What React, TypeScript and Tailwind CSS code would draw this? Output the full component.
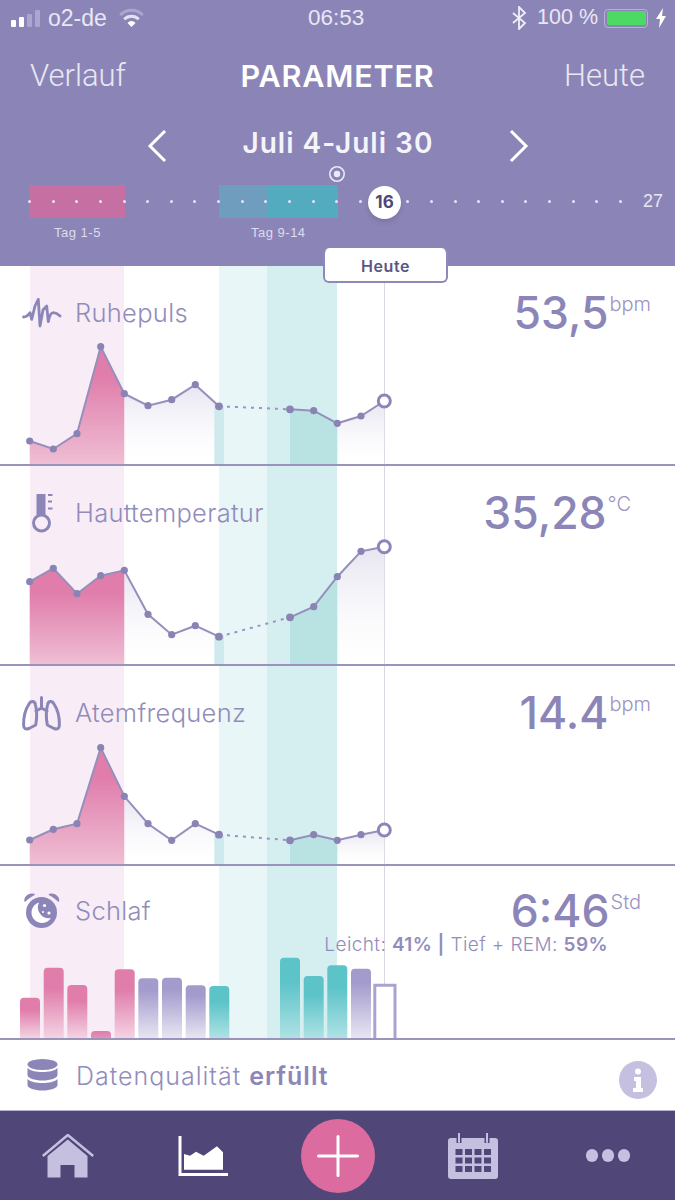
import { ReactNode } from "react";

const xs = [29.7, 53.3, 77, 100.7, 124.3, 148, 171.7, 195.3, 219, 290, 313.7, 337.3, 361, 384.3];

const interpolate = (ys: number[], x: number) => {
  for (let i = 0; i < xs.length - 1; i++) {
    if (x >= xs[i] && x <= xs[i + 1]) {
      return ys[i] + ((ys[i + 1] - ys[i]) * (x - xs[i])) / (xs[i + 1] - xs[i]);
    }
  }
  return ys[0];
};

const toPoints = (ids: number[], ys: number[], base: number) => {
  const top = ids.map((i) => `${xs[i]},${ys[i]}`).join(" ");
  return `${top} ${xs[ids[ids.length - 1]]},${base} ${xs[ids[0]]},${base}`;
};

const LineChart = ({ id, ys, top, base }: { id: string; ys: number[]; top: number; base: number }) => {
  const tealLeft = [
    `214.3,${interpolate(ys, 214.3)}`,
    `219,${ys[8]}`,
    `224,${interpolate(ys, 224)}`,
    `224,${base}`,
    `214.3,${base}`,
  ].join(" ");
  const height = base - top + 1;
  return (
    <svg className="block overflow-visible" width="675" height={height} viewBox={`0 ${top} 675 ${height}`}>
      <defs>
        <linearGradient id={`${id}-pink`} x1="0" y1="0" x2="0" y2="1">
          <stop offset="0.25" stopColor="#e07dab" />
          <stop offset="1" stopColor="#efbed4" />
        </linearGradient>
        <linearGradient id={`${id}-lav`} x1="0" y1="0" x2="0" y2="1">
          <stop offset="0" stopColor="#e6e4f0" />
          <stop offset="1" stopColor="#ffffff" stopOpacity="0.2" />
        </linearGradient>
      </defs>
      <polygon points={toPoints([4, 5, 6, 7, 8], ys, base)} fill={`url(#${id}-lav)`} />
      <polygon points={toPoints([9, 10, 11, 12, 13], ys, base)} fill={`url(#${id}-lav)`} />
      <polygon points={tealLeft} fill="#cfeaed" />
      <polygon points={toPoints([9, 10, 11], ys, base)} fill="#b9e2e3" />
      <polygon points={toPoints([0, 1, 2, 3, 4], ys, base)} fill={`url(#${id}-pink)`} />
      <polyline
        points={[0, 1, 2, 3, 4, 5, 6, 7, 8].map((i) => `${xs[i]},${ys[i]}`).join(" ")}
        fill="none"
        stroke="#9490bb"
        strokeWidth="2"
      />
      <line x1={xs[8]} y1={ys[8]} x2={xs[9]} y2={ys[9]} stroke="#9a95c0" strokeWidth="2" strokeDasharray="3 5" />
      <polyline
        points={[9, 10, 11, 12, 13].map((i) => `${xs[i]},${ys[i]}`).join(" ")}
        fill="none"
        stroke="#9490bb"
        strokeWidth="2"
      />
      {xs.slice(0, 13).map((x, i) => (
        <circle key={i} cx={x} cy={ys[i]} r={i === 8 || i === 9 ? 3.9 : 3.6} fill="#8a84b5" />
      ))}
      <circle cx={xs[13]} cy={ys[13]} r="6" fill="#ffffff" stroke="#8c86b8" strokeWidth="3" />
    </svg>
  );
};

const bars: [number, number, string][] = [
  [20, 997.7, "pink"],
  [43.7, 967.7, "pink"],
  [67.3, 985, "pink"],
  [91, 1031, "flat"],
  [114.7, 969.3, "pink"],
  [138.3, 978.3, "lav"],
  [162, 977.7, "lav"],
  [185.7, 985.3, "lav"],
  [209.3, 986, "teal"],
  [280, 957.7, "teal"],
  [303.7, 976, "teal"],
  [327.3, 965.3, "teal"],
  [351, 968.7, "lav"],
];

const SleepChart = () => {
  const top = 955;
  const base = 1038;
  return (
    <svg className="block overflow-visible" width="675" height={base - top} viewBox={`0 ${top} 675 ${base - top}`}>
      <defs>
        <linearGradient id="bar-pink" x1="0" y1="0" x2="0" y2="1">
          <stop offset="0.3" stopColor="#e07dab" />
          <stop offset="1" stopColor="#f4d3e2" />
        </linearGradient>
        <linearGradient id="bar-flat" x1="0" y1="0" x2="0" y2="1">
          <stop offset="0" stopColor="#df7dab" />
          <stop offset="1" stopColor="#e490b8" />
        </linearGradient>
        <linearGradient id="bar-lav" x1="0" y1="0" x2="0" y2="1">
          <stop offset="0.2" stopColor="#a49bcd" />
          <stop offset="1" stopColor="#e8e5f2" />
        </linearGradient>
        <linearGradient id="bar-teal" x1="0" y1="0" x2="0" y2="1">
          <stop offset="0.3" stopColor="#5cc3c8" />
          <stop offset="1" stopColor="#aee2e4" />
        </linearGradient>
      </defs>
      {bars.map(([x, y, color]) => (
        <path
          key={x}
          d={`M${x} ${base}V${y + 4}Q${x} ${y} ${x + 4} ${y}H${x + 16}Q${x + 20} ${y} ${x + 20} ${y + 4}V${base}Z`}
          fill={`url(#bar-${color})`}
        />
      ))}
      <path d="M374.8 1038V985.3H395V1038" fill="#ffffff" stroke="#aaa3cf" strokeWidth="3" />
    </svg>
  );
};

const PulseIcon = () => (
  <svg width="40" height="30" viewBox="0 0 40 30" fill="none" stroke="#8c86b8" strokeWidth="2.800" strokeLinecap="round" strokeLinejoin="round">
    <path d="M1.500 19Q5 19 8 14.700L9.700 21.300 13 8 16.300 1.300 18 28 21 12 24.700 8 26.300 23.700Q28 14.700 31.300 14.700T38 18" />
  </svg>
);

const ThermoIcon = () => (
  <svg width="22" height="40" viewBox="0 0 22 40" fill="none">
    <circle cx="10.500" cy="30" r="8" stroke="#8c86b8" strokeWidth="3" />
    <path d="M5.500 1h9v21h-9Z" fill="#8c86b8" />
    <path d="M17 2h4.500M17 8.500h4M17 15.500h4.500" stroke="#8c86b8" strokeWidth="2" />
  </svg>
);

const LungsIcon = () => (
  <svg width="40" height="35" viewBox="0 0 40 35" fill="none" stroke="#8c86b8" strokeWidth="3" strokeLinecap="round" strokeLinejoin="round">
    <path d="M19.500 1.500v11M14 15l5.500-3 5.500 3" />
    <path d="M13.500 9C13 5 9 4 7 8 3 14 1.500 22 1.600 29 1.600 33 4 33.500 7 32.500L13.700 29C15 22 15 15 13.500 9Z" />
    <path d="M25.500 9C26 5 30 4 32 8 36 14 37.500 22 37.400 29 37.400 33 35 33.500 32 32.500L25.300 29C24 22 24 15 25.500 9Z" />
  </svg>
);

const AlarmIcon = () => (
  <svg width="36" height="36" viewBox="0 0 36 36">
    <circle cx="17.500" cy="19.500" r="15.500" fill="#8c86b8" />
    <path d="M1 8C1 3 6 .5 10 1.500 6 3 4 5.500 1 8ZM34.500 8C34.500 3 29.500.5 25.500 1.500 29.500 3 31.500 5.500 34.500 8Z" fill="#8c86b8" stroke="#8c86b8" strokeWidth="1.500" strokeLinejoin="round" />
    <path d="M15 9.500A10.500 10.500 0 1 0 27 25 11 11 0 0 1 15 9.500Z" fill="#ffffff" />
    <circle cx="20.500" cy="12.500" r="1.600" fill="#ffffff" />
    <circle cx="25" cy="20" r="1.600" fill="#ffffff" />
    <circle cx="19" cy="19" r="1" fill="#ffffff" />
  </svg>
);

const Row = ({
  icon,
  label,
  value,
  unit,
  pad,
  top = "pt-6",
  extra,
}: {
  icon: ReactNode;
  label: string;
  value: string;
  unit: string;
  pad: string;
  top?: string;
  extra?: ReactNode;
}) => (
  <div className={`flex items-start justify-between pl-[22px] font-['Inter',sans-serif] ${top}`}>
    <div className="flex h-[46px] items-center gap-[13px]">
      <div className="flex w-[40px] justify-center">{icon}</div>
      <span className="text-[25.500px] font-light tracking-[0.3px] text-[#928cbb]">{label}</span>
    </div>
    <div className="flex flex-col items-end">
      <div className={`flex h-[46px] items-center ${pad}`}>
        <span className="text-[44.500px] font-medium leading-none text-[#8c86b8]">{value}</span>
        <span className="mb-[18px] ml-[1px] text-[20px] font-light leading-none text-[#9a94c1]">{unit}</span>
      </div>
      {extra}
    </div>
  </div>
);

const pts1 = [441, 449, 433.7, 346.7, 393.7, 405.7, 399.7, 384.7, 406.3, 409.3, 410.7, 423.3, 416, 401];
const pts2 = [581.7, 568.3, 593.7, 575.7, 570.3, 614.3, 634.7, 625.7, 636.7, 617.3, 606.7, 576.7, 551.3, 546.7];
const pts3 = [840, 829.3, 823.7, 747.7, 796.3, 823.7, 840.3, 823.7, 834.7, 840.3, 834.7, 840.3, 834.7, 830];

const StatusBar = () => (
  <div className="flex h-[36px] items-center justify-between pl-[11px] pr-2 font-['Liberation_Sans',sans-serif] text-[#e9e7f4]">
    <div className="flex items-center">
      <div className="flex h-[17px] items-end gap-[3px]">
        <div className="h-[7px] w-[5px] rounded-[1px] bg-white" />
        <div className="h-[10px] w-[5px] rounded-[1px] bg-white" />
        <div className="h-[13px] w-[5px] rounded-[1px] bg-[#aaa6cd]" />
        <div className="h-[17px] w-[5px] rounded-[1px] bg-[#aaa6cd]" />
      </div>
      <span className="ml-[8px] text-[23px] leading-none">o2-de</span>
      <svg className="ml-[12px]" width="25" height="20" viewBox="0 0 25 20" fill="none">
        <path d="M1.200 7a16 16 0 0 1 22.600 0" stroke="#aaa6cd" strokeWidth="3" />
        <path d="M5.200 11.200a10.500 10.500 0 0 1 14.600 0" stroke="#e4e2f2" strokeWidth="2.800" />
        <path d="M8.500 15a5 5 0 0 1 8 0l-4 4Z" fill="#ffffff" />
      </svg>
    </div>
    <span className="absolute left-[308px] text-[22.500px] leading-none">06:53</span>
    <div className="flex items-center">
      <svg width="16" height="24" viewBox="0 0 16 24" fill="none" stroke="#f0eff8" strokeWidth="1.800">
        <path d="M2 7l12 10-6 6V1l6 6L2 17" />
      </svg>
      <span className="ml-[10px] text-[21.500px] leading-none">100 %</span>
      <div className="ml-[6px] flex h-[19px] w-[44px] rounded-[4px] border border-[#b5b1d4] p-[1.500px]">
        <div className="flex-1 rounded-[2px] bg-[#4cd964]" />
      </div>
      <svg className="ml-[7px]" width="12" height="20" viewBox="0 0 12 20">
        <path d="M8 0L1 11h4l-1 9 7-12H7Z" fill="#ffffff" />
      </svg>
    </div>
  </div>
);

const Timeline = () => (
  <div className="relative h-[33px]">
    <div className="flex h-[33px] pl-[29px]">
      <div className="w-[96px] bg-[#c66fa3]" />
      <div className="w-[94px]" />
      <div className="w-[48px] bg-[#6f9dbd]" />
      <div className="w-[71px] bg-[#53abbf]" />
    </div>
    {/* Tagespunkte */}
    <div className="absolute left-[28px] top-[15px] flex gap-[20.650px]">
      {Array.from({ length: 26 }).map((_, i) => (
        <div key={i} className="h-[3px] w-[3px] rounded-full bg-[#e6e3f2]" />
      ))}
    </div>
    <div className="absolute left-[368px] top-[1px] flex h-[33px] w-[33px] items-center justify-center rounded-full bg-white font-['Inter',sans-serif] text-[17px] font-bold text-[#4f4777] shadow-md">
      16
    </div>
    <span className="absolute left-[643px] top-[7px] font-['Liberation_Sans',sans-serif] text-[18px] leading-none text-[#e9e7f4]">27</span>
    <svg className="absolute left-[328px] top-[-20px]" width="18" height="18" viewBox="0 0 18 18" fill="none">
      <circle cx="9" cy="9" r="7.200" stroke="#ebe9f5" strokeWidth="1.600" />
      <circle cx="9" cy="9" r="3.200" fill="#ebe9f5" />
    </svg>
  </div>
);

const Header = () => (
  <header className="relative z-20 h-[266px] bg-[#8b85b7]">
    <StatusBar />
    <div className="grid h-[80px] grid-cols-[1fr_auto_1fr] items-center px-[30px]">
      <span className="font-['Roboto',sans-serif] text-[31px] font-light text-[#e9e7f4]">Verlauf</span>
      <span className="font-['Inter',sans-serif] text-[30.500px] font-semibold tracking-[0.8px] text-white">PARAMETER</span>
      <span className="text-right font-['Roboto',sans-serif] text-[31px] font-light text-[#e9e7f4]">Heute</span>
    </div>
    <div className="flex h-[53px] items-center justify-center gap-[76px]">
      <svg className="mt-[6px]" width="20" height="34" viewBox="0 0 20 34" fill="none" stroke="#ffffff" strokeWidth="3">
        <path d="M18 2L3 17l15 15" />
      </svg>
      <span className="w-[190px] text-center font-['Inter',sans-serif] text-[28px] font-semibold leading-none tracking-[1px] whitespace-nowrap text-[#f5f4fb]">
        Juli 4-Juli 30
      </span>
      <svg className="mt-[6px]" width="20" height="34" viewBox="0 0 20 34" fill="none" stroke="#ffffff" strokeWidth="3">
        <path d="M2 2l15 15L2 32" />
      </svg>
    </div>
    <div className="mt-[16px]">
      <Timeline />
    </div>
    <div className="mt-[8px] flex pl-[54px] font-['Liberation_Sans',sans-serif] text-[13px] leading-none tracking-[0.5px] text-[#dedbef]">
      <span className="w-[197px]">Tag 1-5</span>
      <span>Tag 9-14</span>
    </div>
    <div className="absolute left-[323px] top-[248px] flex h-[35px] w-[125px] items-center justify-center rounded-[6px] border-2 border-t-0 border-[#8f89ba] bg-white pt-[2px] font-['Inter',sans-serif] text-[16px] font-semibold tracking-[0.6px] text-[#5d5586]">
      Heute
    </div>
  </header>
);

const Stripes = () => (
  <div className="absolute inset-x-0 top-0 h-[773px]">
    <div className="absolute inset-y-0 left-[30px] w-[94px] bg-[#f8edf6]" />
    <div className="absolute inset-y-0 left-[219px] w-[48px] bg-[#e8f6f7]" />
    <div className="absolute inset-y-0 left-[267px] w-[70px] bg-[#d5eff0]" />
    <div className="absolute inset-y-0 left-[384px] w-px bg-[#d9d8e2]" />
  </div>
);

export default function App() {
  return (
    <div className="h-[1200px] w-[675px] overflow-hidden bg-white">
      <Header />
      <main className="relative">
        <Stripes />
        <div className="relative">
          <section className="h-[200px] border-b-2 border-[#9a94bb]">
            <Row icon={<PulseIcon />} label="Ruhepuls" value="53,5" unit="bpm" pad="pr-[24px]" />
            <LineChart id="puls" ys={pts1} top={336} base={464} />
          </section>
          <section className="h-[200px] border-b-2 border-[#9a94bb]">
            <Row icon={<ThermoIcon />} label="Hauttemperatur" value="35,28" unit="°C" pad="pr-[44px]" />
            <LineChart id="temp" ys={pts2} top={536} base={664} />
          </section>
          <section className="h-[200px] border-b-2 border-[#9a94bb]">
            <Row icon={<LungsIcon />} label="Atemfrequenz" value="14.4" unit="bpm" pad="pr-[24px]" />
            <LineChart id="atem" ys={pts3} top={736} base={864} />
          </section>
          <section className="h-[174px] border-b-2 border-[#9a94bb]">
            <div className="h-[89px]">
              <Row
                icon={<AlarmIcon />}
                label="Schlaf"
                value="6:46"
                unit="Std"
                pad="pr-[34px]"
                top="pt-[22px]"
                extra={
                  <p className="mr-[67px] mt-[1px] text-[19px] font-light leading-none tracking-[0.4px] whitespace-nowrap text-[#928cbb]">
                    Leicht: <b className="font-semibold">41% |</b> Tief + REM: <b className="font-semibold">59%</b>
                  </p>
                }
              />
            </div>
            <SleepChart />
          </section>
        </div>
      </main>
      <div className="relative flex h-[71px] items-center justify-between border-b border-[#b5b1d0] bg-white pl-[27px] pr-[18px] font-['Inter',sans-serif]">
        <div className="flex items-center gap-[18px]">
          <svg width="31" height="32" viewBox="0 0 31 32" fill="#8c86b8">
            <ellipse cx="15.500" cy="5.500" rx="15" ry="5.500" />
            <path d="M.5 9c3 3 9 4 15 4s12-1 15-4v7c0 3-7 5.500-15 5.500S.5 19 .5 16Z" />
            <path d="M.5 20c3 3 9 4 15 4s12-1 15-4v6c0 3-7 5.500-15 5.500S.5 29 .5 26Z" />
          </svg>
          <span className="mt-[3px] text-[25px] font-light tracking-[1px] text-[#928cbb]">
            Datenqualität <b className="font-semibold text-[#8c86b8]">erfüllt</b>
          </span>
        </div>
        <div className="mt-[10px] flex h-[38px] w-[38px] items-center justify-center rounded-full bg-[#c5c0e0]">
          <svg width="10" height="24" viewBox="0 0 10 24" fill="#ffffff">
            <circle cx="5" cy="3.500" r="3" />
            <path d="M1 9h7v11h2v4H0v-4h3v-7H1Z" />
          </svg>
        </div>
      </div>
      <nav className="grid h-[89px] grid-cols-5 items-center justify-items-center bg-[#504778]">
        <svg width="52" height="44" viewBox="0 0 52 44">
          <path d="M.8 22L25.800 1 51.200 22" fill="none" stroke="#c5c0e0" strokeWidth="2.500" />
          <path d="M25.800 5.500L45.500 22V43.500H32.500V31H18.500V43.500H5.500V22Z" fill="#c5c0e0" />
        </svg>
        <svg width="50" height="40" viewBox="0 0 50 40">
          <path d="M2 0V38.500H50" fill="none" stroke="#ffffff" strokeWidth="3" />
          <path d="M6 18l6 1.700 6-4 7.700 4L39 10.300l6 6V33.700H6Z" fill="#ffffff" />
        </svg>
        <div className="flex h-[74px] w-[74px] items-center justify-center rounded-full bg-[#dc6b9f]">
          <svg width="42" height="42" viewBox="0 0 42 42" stroke="#ffffff" strokeWidth="3" strokeLinecap="round">
            <path d="M21 1.500v39M1.500 21h39" />
          </svg>
        </div>
        <svg width="50" height="46" viewBox="0 0 50 46">
          <rect y="5" width="50" height="41" rx="3" fill="#c5c0e0" />
          <path d="M11 1v9M39 1v9" stroke="#504778" strokeWidth="5" />
          <path d="M11 0v9M39 0v9" stroke="#c5c0e0" strokeWidth="2" strokeLinecap="round" />
          {[0, 1, 2].map((r) =>
            [0, 1, 2, 3].map((c) => <rect key={`${r}-${c}`} x={7.500 + c * 9.500} y={16 + r * 8.500} width="7" height="6" fill="#504778" />)
          )}
        </svg>
        <div className="flex gap-[4px]">
          <div className="h-[13px] w-[12px] rounded-full bg-[#c5c0e0]" />
          <div className="h-[13px] w-[12px] rounded-full bg-[#c5c0e0]" />
          <div className="h-[13px] w-[12px] rounded-full bg-[#c5c0e0]" />
        </div>
      </nav>
    </div>
  );
}
